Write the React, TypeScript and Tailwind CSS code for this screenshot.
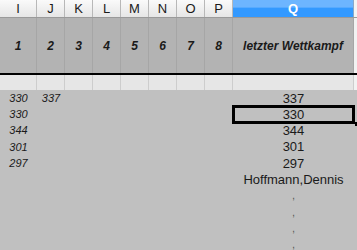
const cols = [
  { key: "I", w: "w-[37px]", num: "1" },
  { key: "J", w: "w-[28px]", num: "2" },
  { key: "K", w: "w-[28px]", num: "3" },
  { key: "L", w: "w-[28px]", num: "4" },
  { key: "M", w: "w-[28px]", num: "5" },
  { key: "N", w: "w-[28px]", num: "6" },
  { key: "O", w: "w-[28px]", num: "7" },
  { key: "P", w: "w-[28px]", num: "8" },
];

const rows = [
  { i: "330", j: "337", q: "337" },
  { i: "330", j: "", q: "330", selected: true },
  { i: "344", j: "", q: "344" },
  { i: "301", j: "", q: "301" },
  { i: "297", j: "", q: "297" },
  { i: "", j: "", q: "Hoffmann,Dennis" },
  { i: "", j: "", q: ",", faint: true },
  { i: "", j: "", q: ",", faint: true },
  { i: "", j: "", q: ",", faint: true },
  { i: "", j: "", q: ",", faint: true },
];

export default function App() {
  return (
    <div
      className="w-[357px] h-[250px] overflow-hidden bg-[#c0c0c0] text-[#1a1a1a]"
      style={{ fontFamily: '"Liberation Sans", Arial, sans-serif' }}
    >
      {/* column letters */}
      <div className="flex h-[18px] border-b border-[#9a9a9a]">
        {cols.map((c) => (
          <div
            key={c.key}
            className={`${c.w} shrink-0 flex items-center justify-center border-r border-[#b8b8b8] bg-gradient-to-b from-[#fafafa] to-[#e6e6e6] text-[13px]`}
          >
            {c.key}
          </div>
        ))}
        <div className="w-[121px] shrink-0 flex items-center justify-center bg-gradient-to-b from-[#6db5ff] from-40% to-[#3399ff] to-50% text-white font-bold text-[13px] border-r border-[#8aa8c8]">
          Q
        </div>
        <div className="flex-1 bg-[#f4f4f4]" />
      </div>

      {/* header titles */}
      <div className="flex h-[57px] border-b-2 border-black bg-[#b3b3b3]">
        {cols.map((c) => (
          <div
            key={c.key}
            className={`${c.w} shrink-0 flex items-center justify-center border-r border-[#a6a6a6] font-bold italic text-[12px]`}
          >
            {c.num}
          </div>
        ))}
        <div className="w-[121px] shrink-0 flex items-center justify-center border-r border-[#a6a6a6] font-bold italic text-[12px]">
          letzter Wettkampf
        </div>
        <div className="flex-1 bg-[#f2f2f2]" />
      </div>

      {/* light row */}
      <div className="flex h-[15px] bg-[#e6e6e6]">
        {cols.map((c) => (
          <div key={c.key} className={`${c.w} shrink-0 border-r border-[#cdcdcd]`} />
        ))}
        <div className="w-[121px] shrink-0 border-r border-[#cdcdcd]" />
        <div className="flex-1 bg-[#f2f2f2]" />
      </div>

      {/* data */}
      <div className="flex flex-col">
        {rows.map((r, idx) => (
          <div key={idx} className="flex h-[16.25px] items-center">
            <div className="w-[37px] shrink-0 text-center italic text-[11px]">{r.i}</div>
            <div className="w-[28px] shrink-0 text-center italic text-[11px]">{r.j}</div>
            <div className="w-[168px] shrink-0" />
            <div className="relative w-[121px] shrink-0 h-full flex items-center justify-center">
              <span className={r.faint ? "text-[11px] text-[#5a5a5a]" : "text-[13px] leading-none"}>
                {r.q}
              </span>
              {r.selected && (
                <>
                  <div className="absolute -left-px -top-px -right-px -bottom-px border-[3px] border-black" />
                  <div className="absolute -right-[5px] -bottom-[3px] w-[4px] h-[4px] bg-black" />
                </>
              )}
            </div>
          </div>
        ))}
      </div>
    </div>
  );
}
